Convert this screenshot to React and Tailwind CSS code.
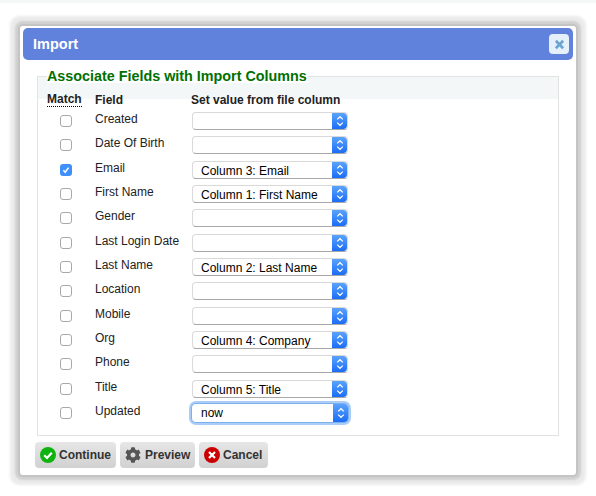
import React from 'react';
import { FaCog } from 'react-icons/fa';

const ROWS = [
  { field: 'Created', value: '' },
  { field: 'Date Of Birth', value: '' },
  { field: 'Email', value: 'Column 3: Email', checked: true },
  { field: 'First Name', value: 'Column 1: First Name' },
  { field: 'Gender', value: '' },
  { field: 'Last Login Date', value: '' },
  { field: 'Last Name', value: 'Column 2: Last Name' },
  { field: 'Location', value: '' },
  { field: 'Mobile', value: '' },
  { field: 'Org', value: 'Column 4: Company' },
  { field: 'Phone', value: '' },
  { field: 'Title', value: 'Column 5: Title' },
  { field: 'Updated', value: 'now', focused: true },
];

const Checkbox = ({ checked }) =>
  checked ? (
    <span className="flex h-3 w-3 items-center justify-center rounded-[3px] bg-[#3f8ffb]">
      <svg viewBox="0 0 12 12" className="h-3 w-3" fill="none" stroke="#fff" strokeWidth="1.6">
        <path d="M3.4 6.2 5.2 8.3 8.6 3.6" />
      </svg>
    </span>
  ) : (
    <span className="h-3 w-3 rounded-[3px] border border-[#a9a9a9] bg-white" />
  );

const SelectBox = ({ value, focused }) => (
  <div
    className={`flex h-[18px] w-[156px] items-stretch rounded-[4px] bg-white ${
      focused
        ? 'shadow-[0_0_0_1px_#7db1ee,0_0_0_3px_#a9cdf6]'
        : 'border border-[#d9d9d9] border-b-[#a8a8a8]'
    }`}
  >
    <span className={`flex-1 truncate text-[12px] leading-[18px] text-black ${focused ? 'pl-[9px]' : 'pl-2'}`}>{value}</span>
    <span className="flex w-[15px] items-center justify-center rounded-r-[4px] bg-gradient-to-b from-[#5aa2fb] to-[#1a6cf6]">
      <svg viewBox="0 0 10 14" className="h-[14px] w-[10px]" fill="none" stroke="#fff" strokeWidth="1.2">
        <path d="M2.2 5.4 5 2.7 7.8 5.4M2.2 8.6 5 11.3 7.8 8.6" />
      </svg>
    </span>
  </div>
);

const Button = ({ icon, label, className }) => (
  <button
    className={`flex h-[26px] items-center gap-[3px] rounded-[4px] bg-gradient-to-b from-[#e6e6e6] to-[#d1d1d1] pl-[5px] text-[12px] font-bold text-[#333] ${className}`}
  >
    {icon}
    {label}
  </button>
);

export default function App() {
  return (
    <div className="h-[496px] w-[596px] overflow-hidden bg-white font-['Liberation_Sans',Arial,sans-serif]">
      <div className="h-[3px] bg-[#f6f8f8]" />
      <div className="ml-[20px] mt-[23px] h-[449px] w-[556px] rounded-[3px] bg-white px-[3px] pt-[2px] shadow-[0_0_0_2px_#c4c4c4,0_0_2px_5px_#d0d0d0,0_0_3px_10px_#ebebeb]">
        <div className="flex h-[32px] items-center justify-between rounded-[5px] bg-[#6082dd] pl-[10px] pr-[4px]">
          <span className="pt-[2px] text-[14.5px] font-bold text-white">Import</span>
          <span className="flex h-[20px] w-[20px] items-center justify-center rounded-[4px] bg-[#e6f0fb]">
            <svg viewBox="0 0 12 12" className="h-[11px] w-[11px]" fill="none" stroke="#6ba5d3" strokeWidth="3">
              <path d="M2 2 10 10M10 2 2 10" />
            </svg>
          </span>
        </div>

        <fieldset className="ml-[14px] mt-[9px] h-[367px] w-[522px] border border-[#e2e2e2] bg-[linear-gradient(#f4f7f7_22px,transparent_22px)] pl-[9px]">
          <legend className="bg-white pr-[1px] text-[14.35px] font-bold leading-[14px] text-[#007000]">
            Associate Fields with Import Columns
          </legend>
          <div className="mt-[10px] grid grid-cols-[48px_96px_auto] justify-start text-[12px] font-bold leading-[14px] text-[#222]">
            <span className="justify-self-start border-b border-dotted border-black leading-[13px]">Match</span>
            <span>Field</span>
            <span>Set value from file column</span>
          </div>
          <div className="mt-[5px]">
            {ROWS.map((row) => (
              <div key={row.field} className="grid h-[24.33px] grid-cols-[48px_96px_auto] items-start justify-start text-[12px] text-[#222]">
                <span className="flex pl-[13px] pt-[3px]">
                  <Checkbox checked={row.checked} />
                </span>
                <span className="leading-[14px]">{row.field}</span>
                <span className="pl-[1px]">
                  <SelectBox value={row.value} focused={row.focused} />
                </span>
              </div>
            ))}
          </div>
        </fieldset>

        <div className="ml-[12px] mt-[6px] flex gap-[4px]">
          <Button
            className="w-[81px]"
            label="Continue"
            icon={
              <svg viewBox="0 0 16 16" className="h-[16px] w-[16px]">
                <circle cx="8" cy="8" r="8" fill="#0fb30f" />
                <path d="M4.2 8.2 7 11 11.8 5.8" fill="none" stroke="#fff" strokeWidth="2.2" />
              </svg>
            }
          />
          <Button
            className="w-[75px] gap-[4px]"
            label="Preview"
            icon={<FaCog className="h-[16px] w-[16px] text-[#555]" />}
          />
          <Button
            className="w-[69px]"
            label="Cancel"
            icon={
              <svg viewBox="0 0 16 16" className="h-[16px] w-[16px]">
                <circle cx="8" cy="8" r="8" fill="#cc0000" />
                <path d="M5 5 11 11M11 5 5 11" fill="none" stroke="#fff" strokeWidth="2.2" />
              </svg>
            }
          />
        </div>
      </div>
    </div>
  );
}
